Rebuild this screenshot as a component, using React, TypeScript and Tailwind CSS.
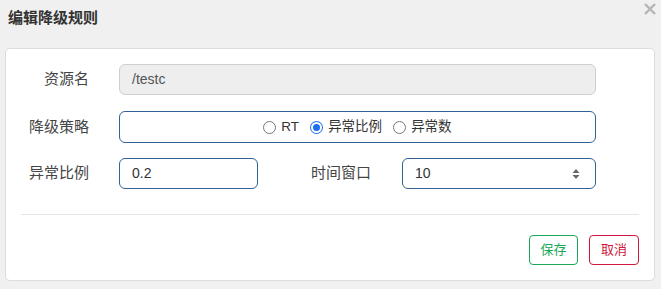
import React from 'react';

const font = { fontFamily: '"Liberation Sans", "Noto Sans CJK SC", sans-serif' };

function Radio({ checked, label }: { checked?: boolean; label: string }) {
  return (
    <label className="flex items-center gap-[5px] text-[13.5px] text-[#333]">
      {checked ? (
        <span className="w-[13px] h-[13px] rounded-full bg-[#1c6ef2] flex items-center justify-center">
          <span className="w-[11px] h-[11px] rounded-full border-2 border-white bg-[#1c6ef2]" />
        </span>
      ) : (
        <span className="w-[13px] h-[13px] rounded-full border border-[#777] bg-white" />
      )}
      <span>{label}</span>
    </label>
  );
}

export default function App() {
  return (
    <div className="w-[661px] h-[289px] bg-[#f0f0f0] flex flex-col" style={font}>
      <div className="h-[48px] flex items-start justify-between pl-[8px] pr-[5px]">
        <div className="mt-[7px] text-[15px] font-bold text-[#333]">编辑降级规则</div>
        <svg width="12" height="12" viewBox="0 0 12 12" className="mt-[3px]">
          <path d="M1 1 L11 11 M11 1 L1 11" stroke="#b5b5b5" strokeWidth="2.4" />
        </svg>
      </div>
      <div className="mx-[5px] w-[650px] h-[233px] bg-white border border-[#dcdcdc] rounded-[5px] px-[15px] pt-[15px] flex flex-col">
        <div className="flex items-center h-[31px]">
          <div className="w-[68px] text-right text-[15px] text-[#444]">资源名</div>
          <div className="ml-[30px] w-[477px] h-[31px] bg-[#eeeeee] border border-[#cfcfcf] rounded-[6px] flex items-center px-[12px] text-[14px] text-[#555]">
            /testc
          </div>
        </div>
        <div className="flex items-center h-[32px] mt-[16px]">
          <div className="w-[68px] text-right text-[15px] text-[#444]">降级策略</div>
          <div className="ml-[30px] w-[477px] h-[32px] border border-[#2f6396] rounded-[6px] flex items-center justify-center gap-[11px]">
            <Radio label="RT" />
            <Radio checked label="异常比例" />
            <Radio label="异常数" />
          </div>
        </div>
        <div className="flex items-center h-[31px] mt-[15px]">
          <div className="w-[68px] text-right text-[15px] text-[#444]">异常比例</div>
          <div className="ml-[30px] w-[139px] h-[31px] border border-[#2f6396] rounded-[6px] flex items-center px-[12px] text-[14px] text-[#333]">
            0.2
          </div>
          <div className="w-[113px] text-right text-[15px] text-[#444]">时间窗口</div>
          <div className="ml-[31px] w-[194px] h-[31px] border border-[#2f6396] rounded-[6px] flex items-center justify-between pl-[12px] pr-[15px] text-[14px] text-[#333]">
            <span>10</span>
            <svg width="8" height="12" viewBox="0 0 8 12">
              <path d="M4 1 L7.5 5 L0.5 5 Z M4 11 L7.5 7 L0.5 7 Z" fill="#666" />
            </svg>
          </div>
        </div>
        <div className="mt-[25px] border-t border-[#e5e5e5]" />
        <div className="mt-[20px] flex justify-end gap-[11px]">
          <button className="w-[49px] h-[30px] border border-[#1aa757] rounded-[4px] text-[13px] text-[#1aa757] bg-white">保存</button>
          <button className="w-[50px] h-[30px] border border-[#d3163b] rounded-[4px] text-[13px] text-[#d3163b] bg-white">取消</button>
        </div>
      </div>
    </div>
  );
}
